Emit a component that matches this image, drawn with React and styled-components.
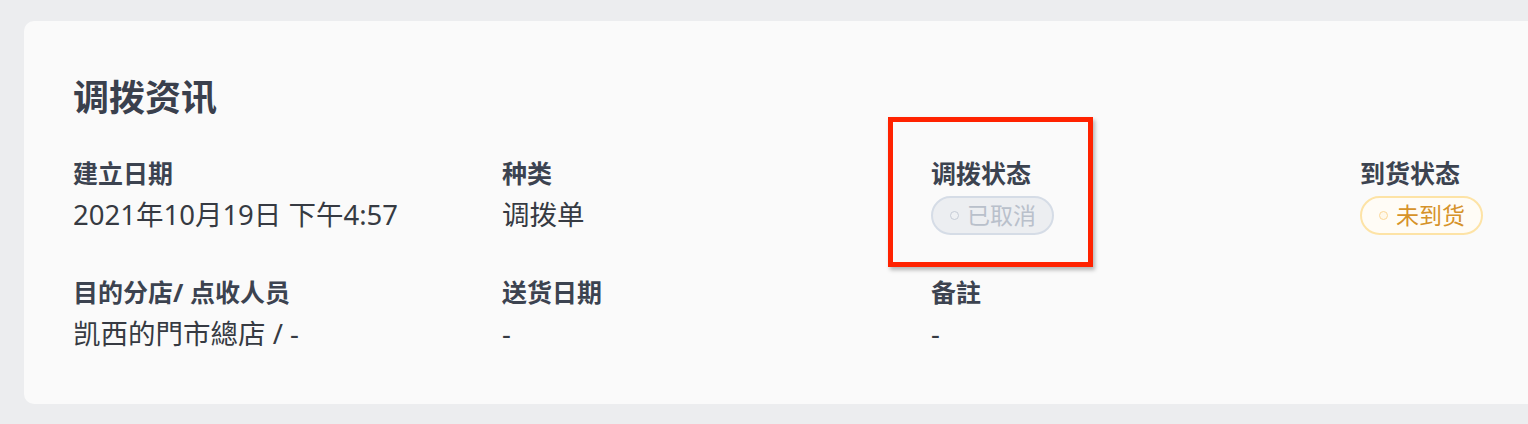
import styled, { createGlobalStyle } from "styled-components";

const GlobalStyle = createGlobalStyle`
  html, body {
    margin: 0;
    padding: 0;
    overflow: hidden;
    background: #ecedef;
  }
  body {
    font-family: "Noto Sans", "Noto Sans CJK SC", sans-serif;
  }
`;

const Page = styled.div`
  padding: 21px 0 0 24px;
  height: 424px;
  box-sizing: border-box;
`;

const Card = styled.section`
  position: relative;
  height: 383px;
  margin-right: -40px;
  box-sizing: border-box;
  padding: 52px 0 0 49px;
  background: #fafafa;
  border-radius: 10px;
`;

const Title = styled.h2`
  margin: 0 0 32px;
  font-size: 36px;
  line-height: 50px;
  font-weight: 700;
  color: #3a404d;
`;

const InfoGrid = styled.div`
  display: grid;
  grid-template-columns: repeat(4, 429px);
  row-gap: 39px;
`;

const Field = styled.div`
  display: flex;
  flex-direction: column;
  gap: 4px;
`;

const Label = styled.div`
  font-size: 25px;
  line-height: 36px;
  font-weight: 700;
  color: #3c4350;
`;

const Value = styled.div`
  min-height: 40px;
  display: flex;
  align-items: center;
  font-size: 27.5px;
  line-height: 36px;
  color: #363a42;
`;

const tones = {
  gray: { bg: "#eceef1", border: "#d5dce6", text: "#b9c0cb", dot: "#c6ccd6", dotBg: "#eef0f3" },
  amber: { bg: "#fffcf6", border: "#fde3a6", text: "#d6932a", dot: "#fbd797", dotBg: "#fff8ea" },
};

const Badge = styled.span`
  display: inline-flex;
  align-items: center;
  gap: 8px;
  height: 39px;
  box-sizing: border-box;
  padding: 0 16px 0 17px;
  border-radius: 20px;
  border: 2px solid ${(p) => tones[p.$tone].border};
  background: ${(p) => tones[p.$tone].bg};
  color: ${(p) => tones[p.$tone].text};
  font-size: 23px;
  line-height: 1;
`;

const Dot = styled.i`
  width: 9px;
  height: 9px;
  box-sizing: border-box;
  border-radius: 50%;
  border: 1.5px solid ${(p) => tones[p.$tone].dot};
  background: ${(p) => tones[p.$tone].dotBg};
`;

const Highlight = styled.div`
  position: absolute;
  left: 864px;
  top: 96px;
  width: 205px;
  height: 150px;
  box-sizing: border-box;
  border: 5px solid #ff2200;
  box-shadow: 2px 3px 4px rgba(0, 0, 0, 0.28);
  pointer-events: none;
`;

const fields = [
  { label: "建立日期", value: "2021年10月19日 下午4:57" },
  { label: "种类", value: "调拨单" },
  { label: "调拨状态", badge: { tone: "gray", text: "已取消" } },
  { label: "到货状态", badge: { tone: "amber", text: "未到货" } },
  { label: "目的分店/ 点收人员", value: "凯西的門市總店 / -" },
  { label: "送货日期", value: "-" },
  { label: "备註", value: "-" },
];

export default function App() {
  return (
    <>
      <GlobalStyle />
      <Page>
        <Card>
          <Title>调拨资讯</Title>
          <InfoGrid>
            {fields.map((f) => (
              <Field key={f.label}>
                <Label>{f.label}</Label>
                <Value>
                  {f.badge ? (
                    <Badge $tone={f.badge.tone}>
                      <Dot $tone={f.badge.tone} />
                      {f.badge.text}
                    </Badge>
                  ) : (
                    f.value
                  )}
                </Value>
              </Field>
            ))}
          </InfoGrid>
          <Highlight />
        </Card>
      </Page>
    </>
  );
}
